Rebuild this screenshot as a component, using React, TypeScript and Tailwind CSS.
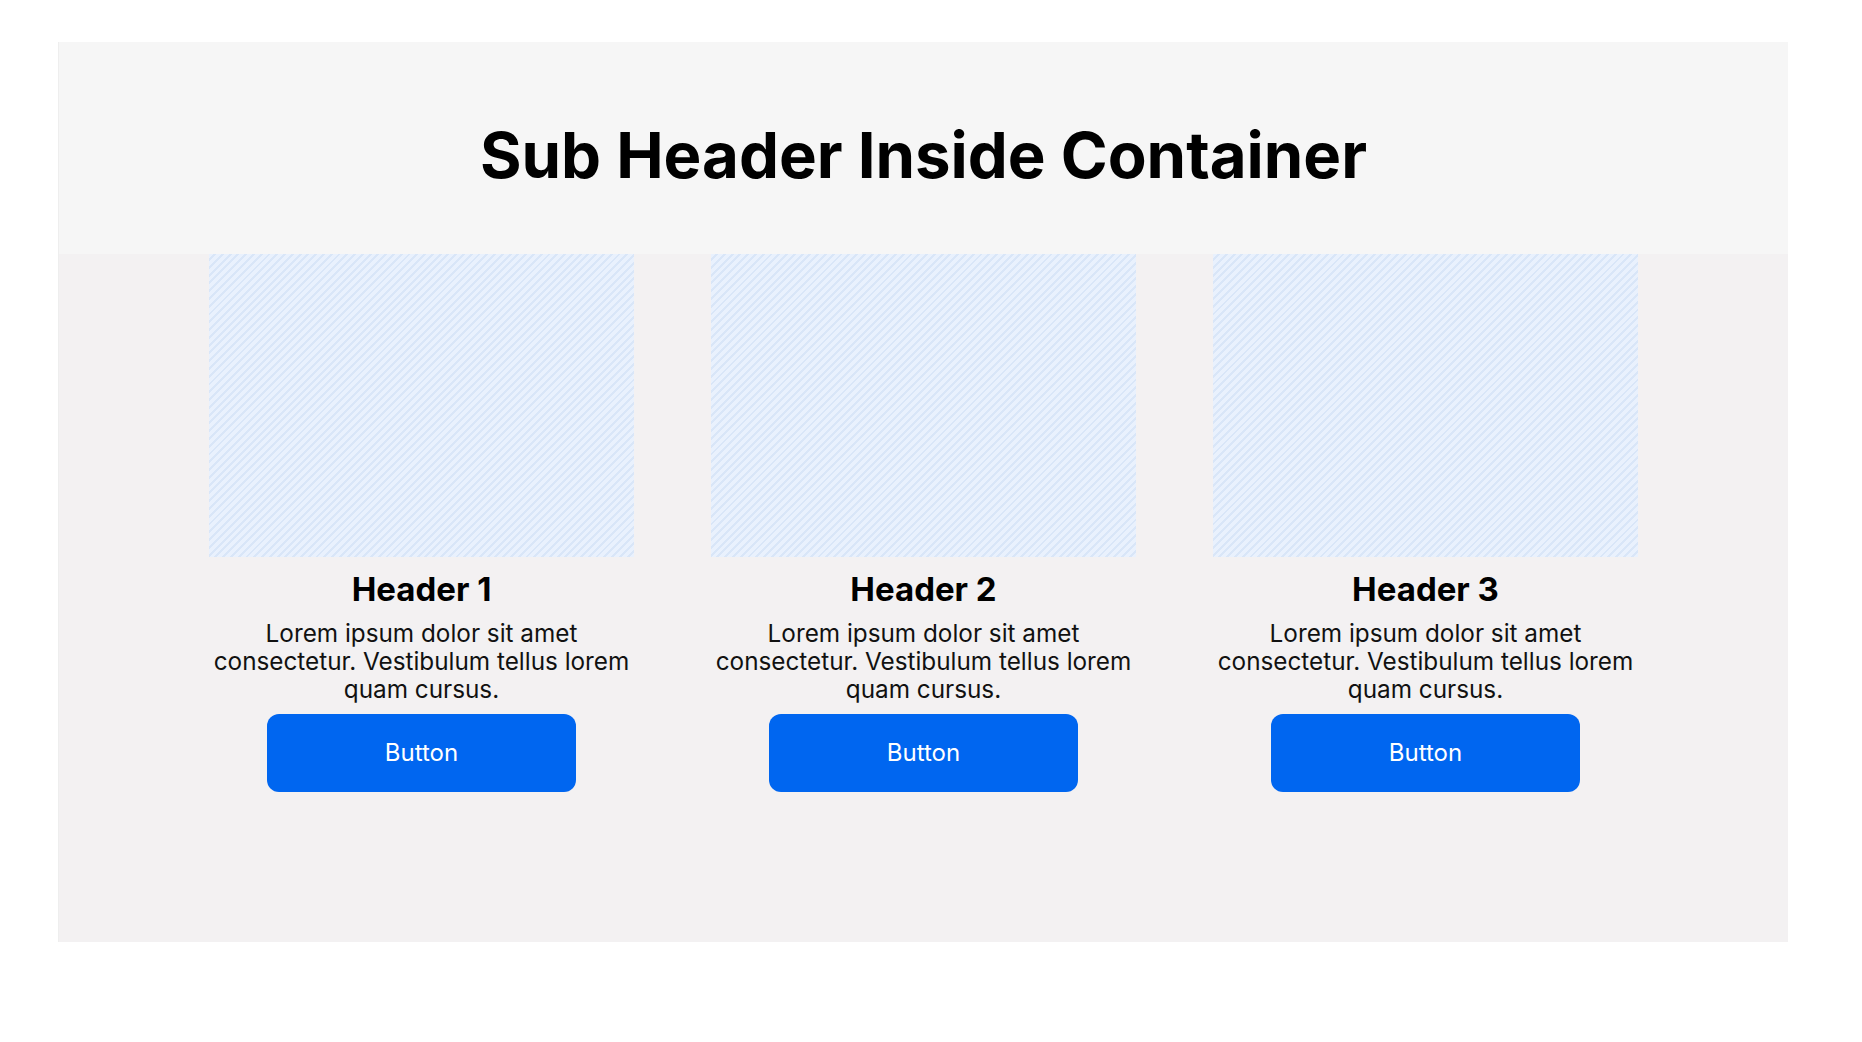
import React from "react";

const cards = [
  { title: "Header 1" },
  { title: "Header 2" },
  { title: "Header 3" },
];

function Card({ title }: { title: string }) {
  return (
    <div className="flex w-[425px] flex-col items-center">
      <div
        className="h-[303px] w-full bg-[#e8f0fc]"
        style={{
          backgroundImage:
            "repeating-linear-gradient(-45deg, #e9f1fd 0px, #e9f1fd 3.5px, #d9e6f8 3.5px, #d9e6f8 5.5px)",
        }}
      />
      <h2 className="mt-[13px] text-[33px] font-bold leading-[38px] text-black">{title}</h2>
      <p className="mt-[11px] text-center text-[24.3px] leading-[28px] text-[#111]">
        Lorem ipsum dolor sit amet consectetur. Vestibulum tellus lorem quam cursus.
      </p>
      <button className="mt-[11px] flex h-[78px] w-[309px] items-center justify-center rounded-[12px] bg-[#0066f0] text-[24px] text-white">
        Button
      </button>
    </div>
  );
}

export default function App() {
  return (
    <div
      className="h-[1042px] w-full bg-white pt-[42px]"
      style={{ fontFamily: "Inter, 'Noto Sans', sans-serif" }}
    >
      <div className="ml-[58px] flex h-[900px] w-[1730px] flex-col border-l border-[#eeeeee] bg-[#f3f1f2]">
        <div className="flex h-[212px] items-center justify-center bg-[#f6f6f6] pt-[14px]">
          <h1 className="text-[63.5px] font-bold leading-none text-black">Sub Header Inside Container</h1>
        </div>
        <div className="flex justify-center gap-[77px]">
          {cards.map((c) => (
            <Card key={c.title} title={c.title} />
          ))}
        </div>
      </div>
    </div>
  );
}
